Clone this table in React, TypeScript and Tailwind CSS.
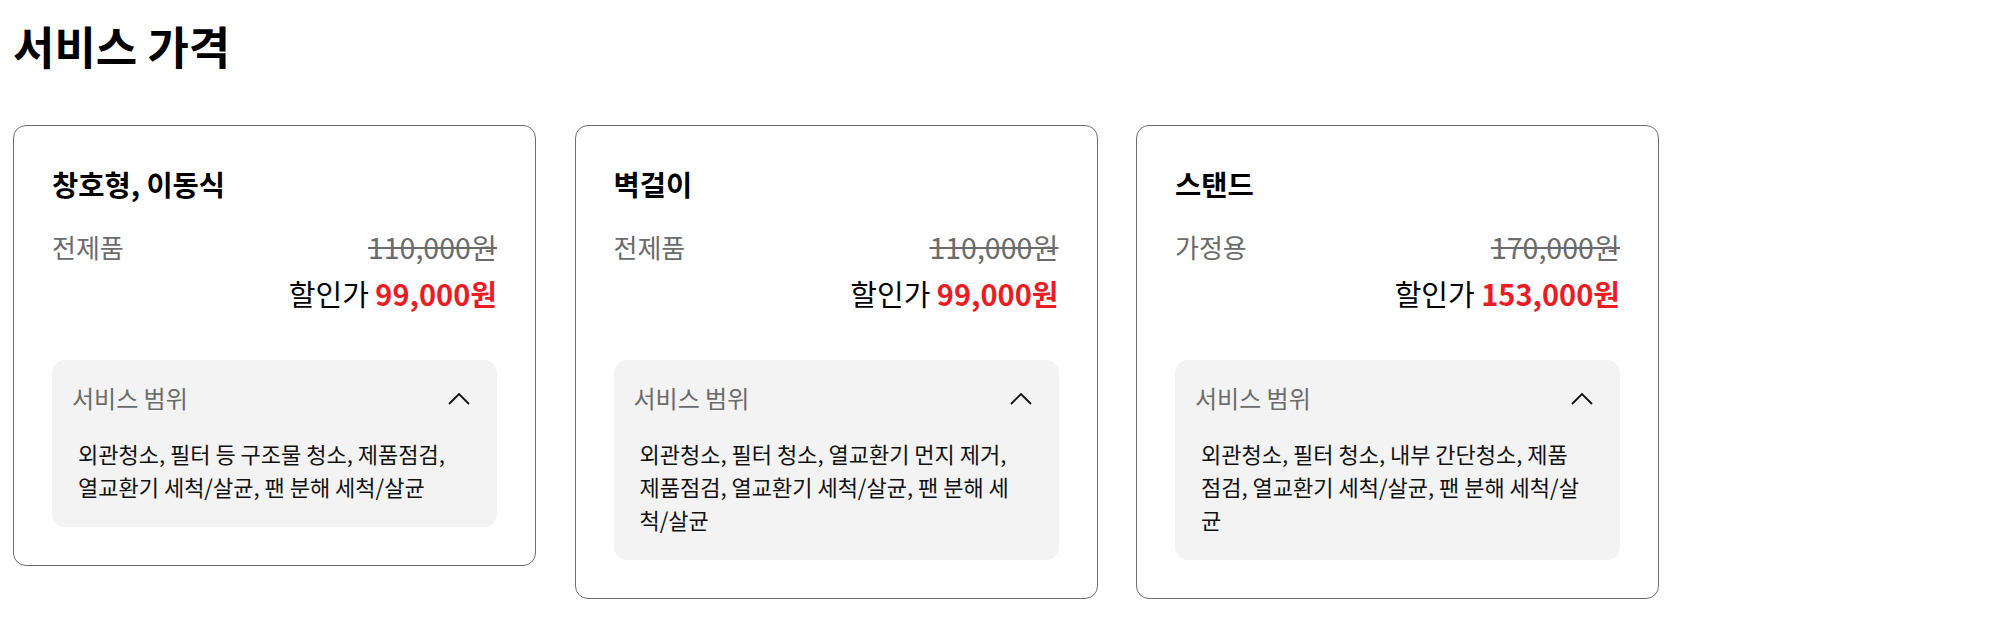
import React from "react";

type Plan = {
  name: string;
  target: string;
  original: string;
  sale: string;
  scope: string;
};

const PLANS: Plan[] = [
  {
    name: "창호형, 이동식",
    target: "전제품",
    original: "110,000원",
    sale: "99,000원",
    scope: "외관청소, 필터 등 구조물 청소, 제품점검, 열교환기 세척/살균, 팬 분해 세척/살균",
  },
  {
    name: "벽걸이",
    target: "전제품",
    original: "110,000원",
    sale: "99,000원",
    scope: "외관청소, 필터 청소, 열교환기 먼지 제거, 제품점검, 열교환기 세척/살균, 팬 분해 세척/살균",
  },
  {
    name: "스탠드",
    target: "가정용",
    original: "170,000원",
    sale: "153,000원",
    scope: "외관청소, 필터 청소, 내부 간단청소, 제품점검, 열교환기 세척/살균, 팬 분해 세척/살균",
  },
];

function ChevronUp() {
  return (
    <svg width="22" height="13" viewBox="0 0 22 13" fill="none">
      <polyline points="1,12 11,2 21,12" stroke="#111" strokeWidth="1.8" />
    </svg>
  );
}

function PriceCard({ plan }: { plan: Plan }) {
  return (
    <div className="w-[523px] shrink-0 rounded-[13px] border border-[#6e6e6e] bg-white p-[38px]">
      <h3 className="text-[28.5px] font-bold leading-[39px] text-black">{plan.name}</h3>

      <div className="mt-[26px] flex items-center justify-between leading-[36px] text-[#6b6b6b]">
        <span className="text-[26px]">{plan.target}</span>
        <span className="text-[28.5px] line-through">{plan.original}</span>
      </div>
      <div className="mt-[7px] text-right text-[29px] leading-[42px] text-black">
        할인가 <span className="font-bold text-[#ec1c24]">{plan.sale}</span>
      </div>

      {/* 서비스 범위 */}
      <div className="mt-[46px] rounded-[13px] bg-[#f3f3f3] pt-5 pb-6">
        <div className="flex items-center justify-between pl-5 pr-[27px]">
          <span className="text-[24px] leading-[36px] text-[#6b6b6b]">서비스 범위</span>
          <ChevronUp />
        </div>
        <p className="mt-[21px] pl-[26px] pr-[35px] text-[22px] leading-[33px] text-[#111]">{plan.scope}</p>
      </div>
    </div>
  );
}

export default function App() {
  return (
    <main
      className="min-h-screen bg-white px-[13px] pt-[13px]"
      style={{ fontFamily: '"Noto Sans CJK KR", "Noto Sans", sans-serif' }}
    >
      <h2 className="text-[45px] font-bold leading-[66px] text-black">서비스 가격</h2>
      <div className="mt-[46px] flex items-start gap-[38.5px]">
        {PLANS.map((p) => (
          <PriceCard key={p.name} plan={p} />
        ))}
      </div>
    </main>
  );
}
